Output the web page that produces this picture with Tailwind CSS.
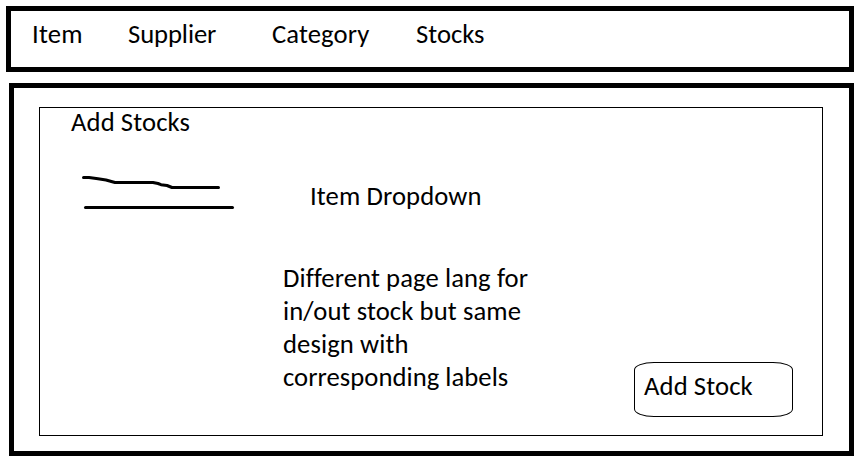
<!DOCTYPE html>
<html lang="en">
<head>
<meta charset="utf-8">
<title>Add Stocks</title>
<script src="https://cdn.jsdelivr.net/npm/@tailwindcss/browser@4"></script>
</head>
<body class="w-[867px] h-[473px] overflow-hidden bg-white pt-[6px] text-black font-[Carlito,Lato,sans-serif] text-[26.67px] leading-[33px] whitespace-nowrap [font-variant-ligatures:none]">
  <nav class="ml-[6px] w-[848px] h-[66px] border-5 border-black flex pl-[21px] pt-[7px]">
    <a class="w-[96px] tracking-[0.2px]">Item</a>
    <a class="w-[144px] tracking-[-0.1px]">Supplier</a>
    <a class="w-[144px] tracking-[0.1px]">Category</a>
    <a>Stocks</a>
  </nav>
  <main class="ml-[9px] mt-[11px] w-[845px] h-[373px] border-5 border-black pl-[25px] pt-[19px]">
    <section class="w-[784px] h-[329px] border border-black flex flex-col">
      <h1 class="ml-[31px] mt-[-2px] h-[32px] tracking-[0.1px]">Add Stocks</h1>
      <div class="flex">
        <svg class="ml-[32px] mt-[28px] shrink-0" width="170" height="50" viewBox="72 166 170 50" fill="none" stroke="#000" stroke-width="3" stroke-linecap="round" stroke-linejoin="round">
          <path d="M83.500 177.500H89L98 178.700L106 180L115 182.500H153L158 183.500L161 184.700L167 185.500L172 187.500H218.500"/>
          <path d="M85.500 207.500H232.500"/>
        </svg>
        <div class="ml-[41px] mt-[42px]">
          <p class="ml-[27px] tracking-[0.1px]">Item Dropdown</p>
          <p class="mt-[49px] tracking-[0.1px]">Different page lang for<br>in/out stock but same<br>design with<br><span class="tracking-[0.04px]">corresponding labels</span></p>
        </div>
        <button class="ml-auto mr-[29px] mt-[224px] w-[159px] h-[55px] border border-black rounded-[20px/8px] text-left pl-[9px] pb-[6px] tracking-[0.1px]">Add Stock</button>
      </div>
    </section>
  </main>
</body>
</html>
